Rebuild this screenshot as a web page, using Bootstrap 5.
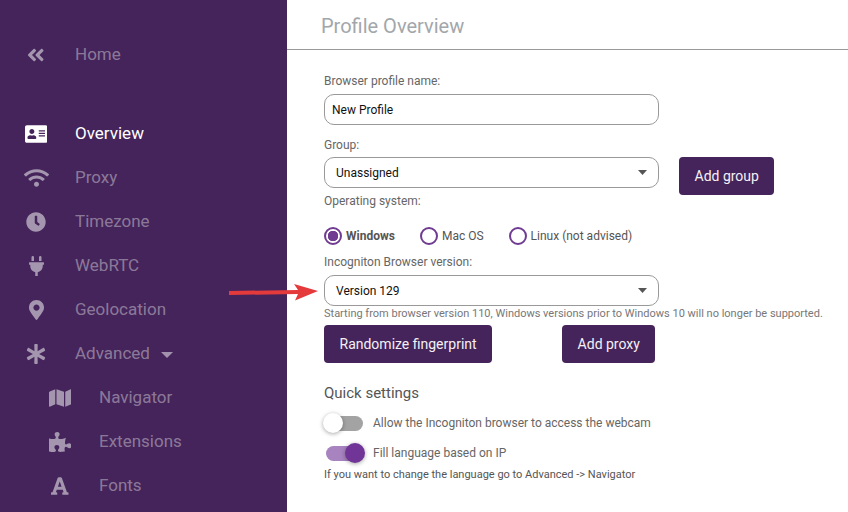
<!DOCTYPE html>
<html lang="en">
<head>
<meta charset="utf-8">
<title>Profile Overview</title>
<link href="https://cdn.jsdelivr.net/npm/bootstrap@5.3.0/dist/css/bootstrap.min.css" rel="stylesheet">
<style>
html,body{height:512px;overflow:hidden}
body{font-family:Roboto,"Liberation Sans",sans-serif;background:#fff;color:#666}
.app-shell{height:512px;position:relative}
.side-panel{width:287px;background:#44245a;padding-top:33px;overflow:hidden}
.side-link{height:44px;padding-left:23px;gap:26px;color:rgba(255,255,255,.4);font-size:17px;text-decoration:none}
.side-link:hover{color:rgba(255,255,255,.4)}
.side-link svg{fill:rgba(255,255,255,.52)}
.side-link.is-active{color:#fff;margin-top:35px}
.side-link.is-active svg{fill:#fff}
.side-link.is-sub{padding-left:47px}
.icon-box{width:26px;flex:none}
.icon-box svg{height:20px;display:block;margin:auto}
.side-caret{width:0;height:0;border-left:6px solid transparent;border-right:6px solid transparent;border-top:6px solid rgba(255,255,255,.5);margin-left:-15px;margin-top:1px}
.page-title{height:50px;padding:14px 0 0 34px;border-bottom:1px solid #999;font-size:20px;line-height:24px;color:#a2a7ab;margin:0;font-weight:400}
.form-area{padding:22px 0 0 37px;font-size:12px}
.field-label{display:block;line-height:18px;margin:0 0 4px;color:#666}
.form-control.field-input,.form-select.field-input{width:335px;height:31px;padding:0 8px 0 7px;border:1px solid #999;border-radius:10px;font-size:12px;color:#111;box-shadow:none}
.form-select.field-input{padding-left:11px;background-image:url("data:image/svg+xml,%3Csvg xmlns='http://www.w3.org/2000/svg' viewBox='0 0 10 5'%3E%3Cpath fill='%23555' d='M0 0h10L5 5z'/%3E%3C/svg%3E");background-size:9px 4.5px;background-position:right 11px center}
.action-btn.btn{background:#44245a;border:0;color:#f4f0f6;height:38px;padding:0 15.5px;font-size:14px;border-radius:4px;line-height:38px}
.os-row{height:24px;margin:14px 0 5px;gap:0}
.os-choice{margin:0;padding:0;min-height:0;font-size:12px;color:#555;gap:4px}
.os-choice .form-check-input{float:none;margin:0;width:18px;height:18px;border:2px solid #6f3c92;background-color:#fff;box-shadow:none}
.os-choice .form-check-input:checked{background-color:#fff;background-image:radial-gradient(circle,#6f3c92 0 5px,transparent 5.5px)}
.help-line{font-size:11px;line-height:14px;color:#777;margin:1px 0 4px}
.section-head{font-size:15px;line-height:20px;font-weight:400;color:#555;margin:20px 0 5px}
.toggle-row{height:30px;gap:10px;margin:0;padding:0;color:#666}
.toggle-row .form-check-input{position:relative;float:none;margin:0 0 0 2px;width:37px;height:15px;border:0;border-radius:8px;background:#a3a3a3;box-shadow:none}
.toggle-row .form-check-input::after{content:"";position:absolute;left:-3px;top:-2.5px;width:20px;height:20px;border-radius:50%;background:#fff;box-shadow:0 1px 4px rgba(0,0,0,.35)}
.toggle-row .form-check-input:checked{background:#a783c0}
.toggle-row .form-check-input:checked::after{left:19px;background:#703596}
.note-line{font-size:11px;line-height:14px;color:#555;margin:0}
.pointer-arrow{position:absolute;left:228px;top:281px;width:92px;height:22px}
.group-label{margin-top:11px;margin-bottom:3px}
.group-row{gap:20px}
.os-label{margin-top:-3px}
.choice-win{margin-right:25px}
.choice-mac{margin-right:25px}
.btn-row{gap:70px}
</style>
</head>
<body>
<div class="app-shell d-flex">
  <nav class="side-panel flex-shrink-0 d-flex flex-column">
    <a class="side-link d-flex align-items-center" href="#"><span class="icon-box"><svg viewBox="0 0 448 512"><path d="M223.7 239l136-136c9.4-9.4 24.6-9.4 33.9 0l22.6 22.6c9.4 9.4 9.4 24.6 0 33.9L319.9 256l96.4 96.4c9.4 9.4 9.4 24.6 0 33.9L393.7 409c-9.4 9.4-24.6 9.4-33.9 0l-136-136c-9.5-9.4-9.5-24.6-.1-34zm-192 34l136 136c9.4 9.4 24.6 9.4 33.9 0l22.6-22.6c9.4-9.4 9.4-24.6 0-33.9L127.9 256l96.4-96.4c9.4-9.4 9.4-24.6 0-33.9L201.7 103c-9.4-9.4-24.6-9.4-33.9 0l-136 136c-9.5 9.4-9.5 24.6-.1 34z"/></svg></span>Home</a>
    <a class="side-link is-active d-flex align-items-center" href="#"><span class="icon-box"><svg viewBox="0 0 576 512"><path d="M528 32H48C21.5 32 0 53.5 0 80v352c0 26.5 21.5 48 48 48h480c26.5 0 48-21.5 48-48V80c0-26.5-21.5-48-48-48zm-352 96c35.3 0 64 28.7 64 64s-28.7 64-64 64-64-28.7-64-64 28.7-64 64-64zm112 236.8c0 10.6-10 19.2-22.4 19.2H86.4C74 384 64 375.4 64 364.8v-19.2c0-31.8 30.1-57.6 67.2-57.6h5c12.3 5.1 25.7 8 39.8 8s27.6-2.9 39.8-8h5c37.1 0 67.2 25.8 67.2 57.6v19.2zM512 312c0 4.4-3.6 8-8 8H360c-4.4 0-8-3.6-8-8v-16c0-4.4 3.6-8 8-8h144c4.4 0 8 3.6 8 8v16zm0-64c0 4.4-3.6 8-8 8H360c-4.4 0-8-3.6-8-8v-16c0-4.4 3.6-8 8-8h144c4.4 0 8 3.6 8 8v16zm0-64c0 4.4-3.6 8-8 8H360c-4.4 0-8-3.6-8-8v-16c0-4.4 3.6-8 8-8h144c4.4 0 8 3.6 8 8v16z"/></svg></span>Overview</a>
    <a class="side-link d-flex align-items-center" href="#"><span class="icon-box"><svg viewBox="0 0 640 512"><path d="M634.91 154.88C457.74-8.99 182.19-8.93 5.09 154.88c-6.66 6.16-6.79 16.59-.35 22.98l34.24 33.97c6.14 6.1 16.02 6.23 22.4.38 145.92-133.68 371.3-133.71 517.25 0 6.38 5.85 16.26 5.71 22.4-.38l34.24-33.97c6.43-6.39 6.3-16.82-.36-22.98zM320 352c-35.35 0-64 28.65-64 64s28.65 64 64 64 64-28.65 64-64-28.65-64-64-64zm202.67-83.59c-115.26-101.93-290.21-101.82-405.34 0-6.9 6.1-7.12 16.69-.57 23.15l34.44 33.99c6 5.92 15.66 6.32 22.05.8 83.95-72.57 209.74-72.41 293.49 0 6.39 5.52 16.05 5.13 22.05-.8l34.44-33.99c6.56-6.46 6.33-17.06-.56-23.15z"/></svg></span>Proxy</a>
    <a class="side-link d-flex align-items-center" href="#"><span class="icon-box"><svg viewBox="0 0 512 512"><path d="M256,8C119,8,8,119,8,256S119,504,256,504,504,393,504,256,393,8,256,8Zm92.49,313h0l-20,25a16,16,0,0,1-22.49,2.5h0l-67-49.72a40,40,0,0,1-15-31.23V112a16,16,0,0,1,16-16h32a16,16,0,0,1,16,16V256l58,42.5A16,16,0,0,1,348.49,321Z"/></svg></span>Timezone</a>
    <a class="side-link d-flex align-items-center" href="#"><span class="icon-box"><svg viewBox="0 0 384 512"><path d="M320,32a32,32,0,0,0-64,0v96h64Zm48,128H16A16,16,0,0,0,0,176v32a16,16,0,0,0,16,16H32v32A160.07,160.07,0,0,0,160,412.8V512h64V412.8A160.07,160.07,0,0,0,352,256V224h16a16,16,0,0,0,16-16V176A16,16,0,0,0,368,160ZM128,32a32,32,0,0,0-64,0v96h64Z"/></svg></span>WebRTC</a>
    <a class="side-link d-flex align-items-center" href="#"><span class="icon-box"><svg viewBox="0 0 384 512"><path d="M172.268 501.67C26.97 291.031 0 269.413 0 192 0 85.961 85.961 0 192 0s192 85.961 192 192c0 77.413-26.97 99.031-172.268 309.67-9.535 13.774-29.93 13.773-39.464 0zM192 272c44.183 0 80-35.817 80-80s-35.817-80-80-80-80 35.817-80 80 35.817 80 80 80z"/></svg></span>Geolocation</a>
    <a class="side-link d-flex align-items-center" href="#"><span class="icon-box"><svg viewBox="0 0 512 512"><path d="M478.21 334.093L336 256l142.21-78.093c11.795-6.477 15.961-21.384 9.232-33.037l-19.48-33.741c-6.728-11.653-21.72-15.499-33.227-8.523L296 186.718l3.475-162.204C299.763 11.061 288.937 0 275.48 0h-38.96c-13.456 0-24.283 11.061-23.994 24.514L216 186.718 77.265 102.607c-11.506-6.976-26.499-3.13-33.227 8.523l-19.48 33.741c-6.728 11.653-2.562 26.56 9.233 33.037L176 256 33.79 334.093c-11.795 6.477-15.961 21.384-9.232 33.037l19.48 33.741c6.728 11.653 21.721 15.499 33.227 8.523L216 325.282l-3.475 162.204C212.237 500.939 223.064 512 236.52 512h38.961c13.456 0 24.283-11.061 23.995-24.514L296 325.282l138.735 84.111c11.506 6.976 26.499 3.13 33.227-8.523l19.48-33.741c6.728-11.653 2.563-26.559-9.232-33.036z"/></svg></span>Advanced<span class="side-caret"></span></a>
    <a class="side-link is-sub d-flex align-items-center" href="#"><span class="icon-box"><svg viewBox="0 0 576 512"><path d="M0 117.66v346.32c0 11.32 11.43 19.06 21.94 14.86L160 416V32L20.12 87.95A32.006 32.006 0 0 0 0 117.66zM192 416l192 64V96L192 32v384zM554.06 33.16L416 96v384l139.88-55.95A31.996 31.996 0 0 0 576 394.34V48.02c0-11.32-11.43-19.06-21.94-14.86z"/></svg></span>Navigator</a>
    <a class="side-link is-sub d-flex align-items-center" href="#"><span class="icon-box"><svg viewBox="0 0 576 512"><path d="M519.442 288.651c-41.519 0-59.5 31.593-82.058 31.593C377.409 320.244 432 144 432 144s-196.288 80-196.288-3.297c0-35.827 36.288-46.25 36.288-85.985C272 19.216 243.885 0 210.539 0c-34.654 0-66.366 18.891-66.366 56.346 0 41.364 31.711 59.277 31.711 81.75C175.885 207.719 0 166.758 0 166.758v333.237s178.635 41.047 178.635-28.662c0-22.473-40-40.107-40-81.471 0-37.456 29.25-56.346 63.577-56.346 33.673 0 61.788 19.216 61.788 54.717 0 39.735-36.288 50.158-36.288 85.985 0 60.803 129.675 25.73 181.23 25.73 0 0-34.725-120.101 25.827-120.101 35.962 0 46.423 36.152 86.308 36.152C556.712 416 576 387.99 576 354.443c0-34.199-18.962-65.792-56.558-65.792z"/></svg></span>Extensions</a>
    <a class="side-link is-sub d-flex align-items-center" href="#"><span class="icon-box"><svg viewBox="0 0 448 512"><path d="M432 416h-23.41L277.88 53.69A32 32 0 0 0 247.58 32h-47.16a32 32 0 0 0-30.3 21.69L39.41 416H16a16 16 0 0 0-16 16v32a16 16 0 0 0 16 16h128a16 16 0 0 0 16-16v-32a16 16 0 0 0-16-16h-19.6l23.3-64h152.6l23.3 64H304a16 16 0 0 0-16 16v32a16 16 0 0 0 16 16h128a16 16 0 0 0 16-16v-32a16 16 0 0 0-16-16zM176.85 272L224 142.51 271.15 272z"/></svg></span>Fonts</a>
  </nav>
  <main class="flex-grow-1">
    <h1 class="page-title">Profile Overview</h1>
    <form class="form-area">
      <label class="field-label" for="pname">Browser profile name:</label>
      <input id="pname" class="form-control field-input" type="text" value="New Profile">
      <label class="field-label group-label" for="pgroup">Group:</label>
      <div class="d-flex align-items-start group-row">
        <select id="pgroup" class="form-select field-input"><option>Unassigned</option></select>
        <button type="button" class="btn action-btn add-group">Add group</button>
      </div>
      <div class="field-label os-label">Operating system:</div>
      <div class="d-flex os-row align-items-center">
        <label class="form-check os-choice d-flex align-items-center choice-win"><input class="form-check-input" type="radio" name="os" checked><b>Windows</b></label>
        <label class="form-check os-choice d-flex align-items-center choice-mac"><input class="form-check-input" type="radio" name="os">Mac OS</label>
        <label class="form-check os-choice d-flex align-items-center"><input class="form-check-input" type="radio" name="os">Linux (not advised)</label>
      </div>
      <label class="field-label" for="pver">Incogniton Browser version:</label>
      <select id="pver" class="form-select field-input"><option>Version 129</option></select>
      <p class="help-line">Starting from browser version 110, Windows versions prior to Windows 10 will no longer be supported.</p>
      <div class="d-flex btn-row">
        <button type="button" class="btn action-btn">Randomize fingerprint</button>
        <button type="button" class="btn action-btn">Add proxy</button>
      </div>
      <h2 class="section-head">Quick settings</h2>
      <label class="form-check form-switch toggle-row d-flex align-items-center"><input class="form-check-input" type="checkbox" role="switch">Allow the Incogniton browser to access the webcam</label>
      <label class="form-check form-switch toggle-row d-flex align-items-center"><input class="form-check-input" type="checkbox" role="switch" checked>Fill language based on IP</label>
      <p class="note-line">If you want to change the language go to Advanced -&gt; Navigator</p>
    </form>
  </main>
  <svg class="pointer-arrow" viewBox="0 0 92 22" aria-hidden="true"><path fill="#e53a3c" d="M1 10L70 9L66 3L90 10L67 19.5L70 13L1 14z"/></svg>
</div>
<script src="https://cdn.jsdelivr.net/npm/bootstrap@5.3.0/dist/js/bootstrap.bundle.min.js"></script>
</body>
</html>
